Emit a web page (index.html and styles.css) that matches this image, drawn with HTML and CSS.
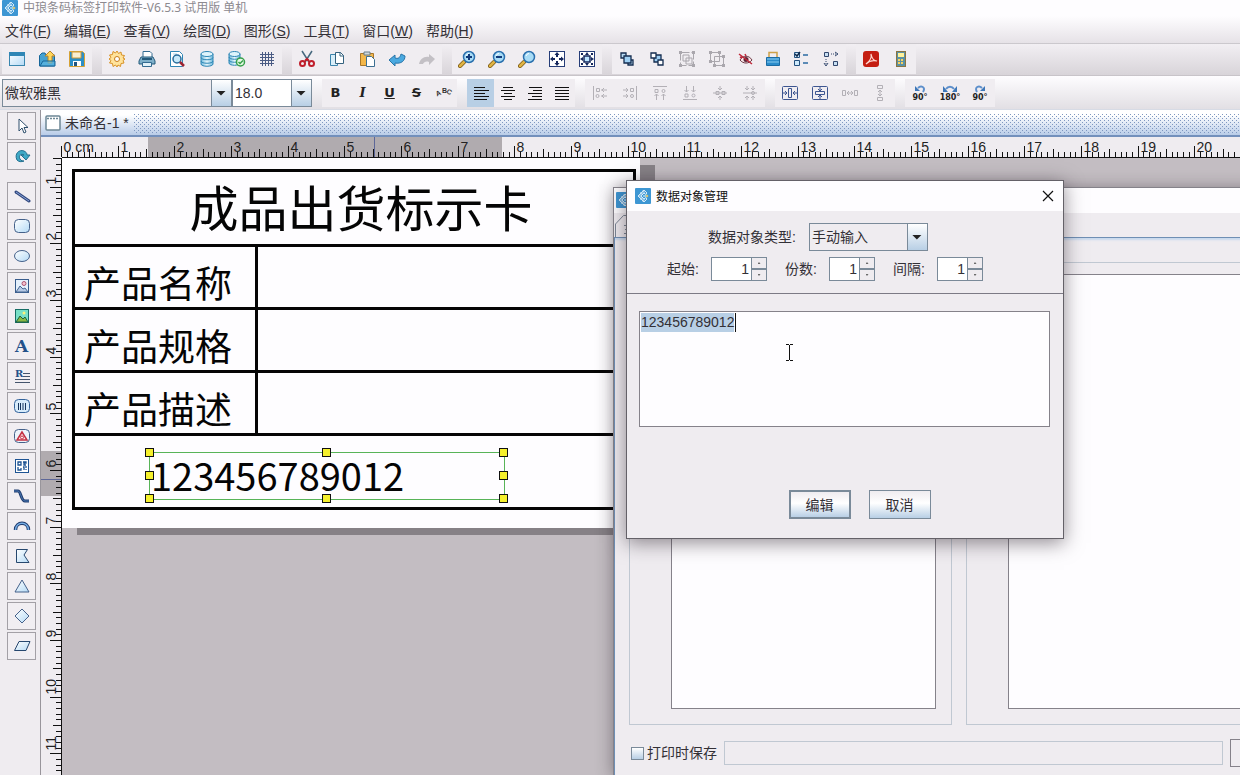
FILE: index.html
```html
<!DOCTYPE html>
<html lang="zh-CN">
<head>
<meta charset="utf-8">
<title>中琅条码标签打印软件</title>
<link rel="stylesheet" href="styles.css">
</head>
<body>
<svg class="defs" aria-hidden="true">
  <defs>
    <linearGradient id="sky" x1="0" y1="0" x2="1" y2="1"><stop offset="0" stop-color="#fff"/><stop offset="1" stop-color="#b4daf6"/></linearGradient>
    <linearGradient id="cyl" x1="0" x2="1"><stop offset="0" stop-color="#6cb8dc"/><stop offset=".5" stop-color="#e6f6fc"/><stop offset="1" stop-color="#6cb8dc"/></linearGradient>
  </defs>
  <symbol id="logo" viewBox="0 0 16 16">
    <rect width="16" height="16" rx="1" fill="#3d96d3"/>
    <g fill="none" stroke="#e4f3fc" stroke-width=".9"><path d="M9 2 12 5 10.500 6.500 9 5 6 8l3 3 1.500-1.500L12 11l-3 3-6-6z"/><path d="m9 3.500-4.500 4.500 4.500 4.500"/><path d="m5 4 6 6M5 12l6-6M7.500 2.500l3 3M7.500 13.500l3-3" stroke-width=".5"/></g>
    <path d="m11 6 2 2-2 2-2-2z" fill="#8fd0f0"/><circle cx="12" cy="8" r="1.300" fill="#d3c27a"/>
  </symbol>
  <symbol id="lens" viewBox="0 0 18 18"><path d="m2 16 4-4" stroke="#7a5a12" stroke-width="4" stroke-linecap="round"/><path d="m2 16 4-4" stroke="#e0b445" stroke-width="2.500" stroke-linecap="round"/><circle cx="11" cy="7" r="5.500" fill="#a8dcf6" stroke="#2b70ae" stroke-width="1.500"/><path d="M8 6a3.500 3.500 0 0 1 3-2.500" stroke="#fff" fill="none"/></symbol>
</svg>

<header class="titlebar"><svg class="logo"><use href="#logo"/></svg><span>中琅条码标签打印软件-V6.5.3 试用版 单机</span></header>

<nav class="menubar">
  <a href="#">文件(<u>F</u>)</a><a href="#">编辑(<u>E</u>)</a><a href="#">查看(<u>V</u>)</a><a href="#">绘图(<u>D</u>)</a><a href="#">图形(<u>S</u>)</a><a href="#">工具(<u>T</u>)</a><a href="#">窗口(<u>W</u>)</a><a href="#">帮助(<u>H</u>)</a>
</nav>

<div class="toolbar">
  <div class="group">
    <button aria-label="新建"><svg viewBox="0 0 18 18"><rect x="1.500" y="2.500" width="15" height="13" fill="url(#sky)" stroke="#3a86ae"/><path d="M1 2h16v4H1z" fill="#2f86b5"/></svg></button>
    <button aria-label="打开"><svg viewBox="0 0 18 18"><path d="M1.500 5.500 4 3h3l1 2h8.500v11h-15z" fill="#45a2d2" stroke="#17669a"/><path d="m12 1 5 5h-3v7h-4V6H7z" fill="#ffd65b" stroke="#b8842b"/><path d="M2 16 5 11h12v5z" fill="#5cb6e1" stroke="#17669a" fill-opacity=".7"/></svg></button>
    <button aria-label="保存"><svg viewBox="0 0 18 18"><path d="M1.500 1.500h13l2 2v13h-15z" fill="#2b8fc7" stroke="#d7a235"/><path d="M4 2h9v6H4z" fill="#fbefd0" stroke="#cf9a38"/><path d="M5 11h8v5H5z" fill="#fff"/><path d="M6 12h3v4H6z" fill="#205580"/></svg></button>
  </div>
  <div class="group">
    <button aria-label="设置"><svg viewBox="0 0 18 18"><path d="m9 1 1.500 2.500 2.500-1.500.500 3 3 .500-1.500 2.500L17 9l-2 1.500 1 2.500-3 .500-.500 3-2.500-1.500L9 17l-1.500-2-2.500 1.500-.500-3-3-.500L3 10.500 1 9l2-1.500L1.500 5l3-.500.500-3L7.500 3z" fill="#ffe39b" stroke="#d89227"/><circle cx="9" cy="9" r="2.500" fill="#fff" stroke="#c77c1b"/></svg></button>
    <button aria-label="打印"><svg viewBox="0 0 18 18"><path d="M5 7V1.500h7l2 2V7" fill="#fff" stroke="#336b91"/><path d="m3 7-2 4v3h16v-3l-2-4z" fill="#7fb0ca" stroke="#255a7b"/><path d="M4 9h10" stroke="#255a7b" stroke-width="2"/><path d="M4.500 12.500h9v4h-9z" fill="#e1f2fa" stroke="#336b91"/></svg></button>
    <button aria-label="预览"><svg viewBox="0 0 18 18"><path d="M2.500 1.500h9l3 3v12h-12z" fill="#fff" stroke="#2f86b5"/><path d="M5 4h4" stroke="#a8d3ea"/><circle cx="9" cy="9" r="4" fill="#c6e9fa" stroke="#266b9b" stroke-width="1.500"/><path d="m12 12 4 4" stroke="#9c2330" stroke-width="2.500"/></svg></button>
    <button aria-label="数据库"><svg viewBox="0 0 18 18"><path d="M3 4v10c0 3 12 3 12 0V4" fill="url(#cyl)" stroke="#2e86b5"/><ellipse cx="9" cy="4" rx="6" ry="2.500" fill="#dff4fc" stroke="#2e86b5"/><path d="M3 7.500c0 3 12 3 12 0M3 11c0 3 12 3 12 0" fill="none" stroke="#2e86b5"/></svg></button>
    <button aria-label="数据库连接"><svg viewBox="0 0 18 18"><path d="M1 4v9c0 3 11 3 11 0V4" fill="url(#cyl)" stroke="#2e86b5"/><ellipse cx="6.500" cy="4" rx="5.500" ry="2.500" fill="#dff4fc" stroke="#2e86b5"/><path d="M1 7c0 3 11 3 11 0M1 10c0 3 11 3 11 0" fill="none" stroke="#2e86b5"/><circle cx="12.500" cy="12" r="4" fill="#e6fae5" stroke="#37a04b" stroke-width="1.500"/><path d="m10.500 12 1.500 1.500 3-3" fill="none" stroke="#37a04b" stroke-width="1.500"/></svg></button>
    <button aria-label="网格"><svg viewBox="0 0 18 18"><path d="M4.500 2v14M7.500 2v14M10.500 2v14M13.500 2v14M2 4.500h14M2 7.500h14M2 10.500h14M2 13.500h14" stroke="#4a5b84" fill="none"/></svg></button>
  </div>
  <div class="group">
    <button aria-label="剪切"><svg viewBox="0 0 18 18"><path d="M4 1l7 11M14 1 7 12" stroke="#46687e" stroke-width="1.500"/><circle cx="4.500" cy="13.500" r="2.500" fill="none" stroke="#c01e2b" stroke-width="2"/><circle cx="13.500" cy="13.500" r="2.500" fill="none" stroke="#c01e2b" stroke-width="2"/><path d="m7 11 2-2 2 2" stroke="#c01e2b" stroke-width="2" fill="none"/></svg></button>
    <button aria-label="复制"><svg viewBox="0 0 18 18"><path d="M2.500 4.500h7v11h-7z" fill="#d9eef9" stroke="#3c84ac"/><path d="M7.500 2.500h5l3 3v8h-8z" fill="#fff" stroke="#35627f"/><path d="M12 2v4h4" fill="none" stroke="#35627f"/></svg></button>
    <button aria-label="粘贴"><svg viewBox="0 0 18 18"><path d="M2.500 3.500h13v12h-13z" fill="#f3b74a" stroke="#a9772a"/><path d="M6 2h6v3H6z" fill="#cfd8dc" stroke="#687c88"/><path d="M8.500 6.500h5l3 3v7h-8z" fill="#fff" stroke="#3c6f92"/></svg></button>
    <button aria-label="撤销"><svg viewBox="0 0 18 18"><path d="m1 10 6-5v3c3 1 5 0 6-4l4 2c0 5-4 8-10 7v3z" fill="#4aa9e0" stroke="#2874a8"/></svg></button>
    <button aria-label="重做" disabled><svg viewBox="0 0 18 18"><path d="m17 9-6-5v3C6 6 2 9 1 14h4c1-2 3-3 6-2v3z" fill="#c3c0c5"/></svg></button>
  </div>
  <div class="group">
    <button aria-label="放大"><svg viewBox="0 0 18 18"><use href="#lens"/><path d="M8 7h6M11 4v6" stroke="#123a7b" stroke-width="2"/></svg></button>
    <button aria-label="缩小"><svg viewBox="0 0 18 18"><use href="#lens"/><path d="M8 7h6" stroke="#123a7b" stroke-width="2"/></svg></button>
    <button aria-label="缩放"><svg viewBox="0 0 18 18"><use href="#lens"/></svg></button>
    <button aria-label="适合窗口"><svg viewBox="0 0 18 18"><rect x="1.500" y="1.500" width="15" height="15" fill="#fff" stroke="#263d78"/><path d="m9 2 2.500 3h-5zM9 16l2.500-3h-5zM2 9l3-2.500v5zM16 9l-3-2.500v5zM8 5h2v2H8zM8 11h2v2H8zM5 8h2v2H5zM11 8h2v2h-2z" fill="#15275c"/></svg></button>
    <button aria-label="适合选择"><svg viewBox="0 0 18 18"><rect x="1.500" y="1.500" width="15" height="15" fill="#fff" stroke="#263d78"/><rect x="6" y="6" width="6" height="6" fill="#bde4ff" stroke="#15275c" stroke-width="1.500"/><path d="m9 2 2 3H7zM9 16l2-3H7zM2 9l3-2v4zM16 9l-3-2v4zM3 3h2v2H3zM13 3h2v2h-2zM3 13h2v2H3zM13 13h2v2h-2z" fill="#15275c"/></svg></button>
  </div>
  <div class="group">
    <button aria-label="置前"><svg viewBox="0 0 18 18"><g stroke="#142d50" stroke-width="1.300"><path d="M3 3h5v5H3z" fill="#b9dcf4"/><path d="M10 10h5v5h-5z" fill="#b9dcf4"/><path d="M6 6h7v7H6z" fill="#9fd0f4"/></g></svg></button>
    <button aria-label="置后"><svg viewBox="0 0 18 18"><g stroke="#142d50" stroke-width="1.300"><path d="M6 5h7v7H6z" fill="#9fd0f4"/><path d="M3 3h5v5H3zM10 10h5v5h-5z" fill="#fff"/></g></svg></button>
    <button aria-label="组合" disabled><svg viewBox="0 0 18 18"><g fill="none" stroke="#aaa7ad"><path d="M2.500 2.500h13v13h-13z" stroke-dasharray="9 2"/><path d="M5 5h6v6H5zM8 8h6v6H8z"/></g><path d="M1 1h3v3H1zM14 1h3v3h-3zM1 14h3v3H1zM14 14h3v3h-3z" fill="#aaa7ad"/></svg></button>
    <button aria-label="取消组合" disabled><svg viewBox="0 0 18 18"><g fill="none" stroke="#aaa7ad"><path d="M2.500 2.500h9v9h-9zM6.500 6.500h9v9h-9z"/></g><path d="M1 1h3v3H1zM10 1h3v3h-3zM1 10h3v3H1zM14 5h3v3h-3zM5 14h3v3H5zM14 14h3v3h-3z" fill="#aaa7ad"/></svg></button>
    <button class="narrow" aria-label="隐藏"><svg viewBox="0 0 18 18"><path d="M3 10c3-5 9-5 12 0-3 4-9 4-12 0z" fill="#f8e7e9" stroke="#6b3744"/><circle cx="9" cy="9.500" r="2.500" fill="#5b2638"/><path d="m2 4 13 10M3 7l2 1M8 4l1 2" stroke="#c0283a" stroke-width="1.500"/></svg></button>
    <button class="narrow" aria-label="锁定"><svg viewBox="0 0 18 18"><path d="M5 8V2.500h8V8" fill="none" stroke="#cda149" stroke-width="1.500"/><path d="M2.500 7.500h13v8h-13z" fill="#2b8ccb" stroke="#1a6ba3"/><path d="M3 9h12M3 12h12" stroke="#8ccdf0"/></svg></button>
    <button aria-label="属性"><svg viewBox="0 0 18 18"><path d="M2.500 2.500h5v5h-5zM2.500 10.500h5v5h-5z" fill="#cfeafb" stroke="#22507e"/><path d="m3 4 2 2 3-4" fill="none" stroke="#10284a" stroke-width="1.500"/><path d="M11 5h5M11 13h5" stroke="#2b6ba3" stroke-width="1.500"/></svg></button>
    <button aria-label="顺序"><svg viewBox="0 0 18 18"><path d="M2.500 2.500h4v4h-4zM11.500 11.500h4v4h-4z" fill="#c8dff2" stroke="#32476d"/><path d="M9 4h5M4 9v5" stroke="#32476d" stroke-dasharray="1 1"/><path d="m13 2 3 2-3 2M2 13l2 3 2-3" fill="none" stroke="#32476d"/></svg></button>
  </div>
  <div class="group">
    <button aria-label="PDF"><svg viewBox="0 0 18 18"><rect x="1" y="1" width="16" height="16" rx="3" fill="#c41e12"/><path d="M9 4c1 5 3 7 6 7-4-1-8 0-11 3 4-3 6-6 5-10z" fill="none" stroke="#ffd8d0" stroke-width="1.200"/></svg></button>
    <button aria-label="计算器"><svg viewBox="0 0 18 18"><rect x="4.500" y="1.500" width="9" height="15" fill="#5b92a5" stroke="#8a7440"/><path d="M6 3h6v4H6z" fill="#fff29a"/><path d="M6 9h2v2H6zM9 9h2v2H9zM6 12h2v2H6zM9 12h2v2H9z" fill="#fbd25e"/></svg></button>
  </div>
</div>

<div class="toolbar format">
  <div class="combo font"><select aria-label="字体"><option>微软雅黑</option></select></div>
  <div class="combo size"><select aria-label="字号"><option>18.0</option></select></div>
  <div class="group letters">
    <button class="b">B</button><button class="i">I</button><button class="u">U</button><button class="s">S</button>
    <button aria-label="弧形文字"><svg viewBox="0 0 18 18"><g class="arc-text"><text x="2" y="12" transform="rotate(-25 3 12)">A</text><text x="7" y="9">B</text><text x="11" y="9" transform="rotate(25 11 9)">C</text></g></svg></button>
  </div>
  <div class="group aligns">
    <button class="on" aria-label="左对齐"><svg viewBox="0 0 18 18"><path d="M2 3.500h11M2 6.500h15M2 9.500h11M2 12.500h15M2 15.500h13" stroke="#111"/></svg></button>
    <button aria-label="居中"><svg viewBox="0 0 18 18"><path d="M4 3.500h10M2 6.500h14M5 9.500h8M2 12.500h14M5 15.500h8" stroke="#111"/></svg></button>
    <button aria-label="右对齐"><svg viewBox="0 0 18 18"><path d="M3 3.500h13M7 6.500h9M2 9.500h14M6 12.500h10M2 15.500h14" stroke="#111"/></svg></button>
    <button aria-label="两端对齐"><svg viewBox="0 0 18 18"><path d="M2 3.500h14M2 6.500h14M2 9.500h14M2 12.500h14M2 15.500h14" stroke="#111"/></svg></button>
  </div>
  <div class="group dim">
    <button disabled aria-label="对齐左边"><svg viewBox="0 0 18 18"><path d="M2.500 2v14M5.500 4.500h3v3h-3zM10 6h6M13 4l-2 2 2 2M10 12h6M13 10l-2 2 2 2"/><circle cx="6.500" cy="12" r="1.500"/></svg></button>
    <button disabled aria-label="对齐右边"><svg viewBox="0 0 18 18"><path d="M15.500 2v14M9.500 4.500h3v3h-3zM2 6h5M5 4l2 2-2 2M2 12h5M5 10l2 2-2 2"/><circle cx="11" cy="12" r="1.500"/></svg></button>
    <button disabled aria-label="对齐上边"><svg viewBox="0 0 18 18"><path d="M2 2.500h14M4 5.500h3v3H4zM5.500 10v6M3.500 12l2-2 2 2M12.500 10v6M10.500 12l2-2 2 2"/><circle cx="12.500" cy="7" r="1.500"/></svg></button>
    <button disabled aria-label="对齐下边"><svg viewBox="0 0 18 18"><path d="M2 15.500h14M4 10h3v3H4zM5.500 2v6M3.500 6l2 2 2-2M12.500 2v6M10.500 6l2 2 2-2"/><circle cx="12.500" cy="11.500" r="1.500"/></svg></button>
    <button disabled aria-label="水平居中"><svg viewBox="0 0 18 18"><path d="M2 9h14M5 7.500h3v3H5zM11 7.500h3v3h-3zM9 2v4M7 4l2 2 2-2M9 16v-4M7 14l2-2 2 2"/></svg></button>
    <button disabled aria-label="垂直居中"><svg viewBox="0 0 18 18"><path d="M2 9h14M6 2v4M4 4l2 2 2-2M12 2v4M10 4l2 2 2-2M6 16v-4M4 14l2-2 2 2M12 16v-4M10 14l2-2 2 2"/><circle cx="12" cy="9" r="1.500"/></svg></button>
  </div>
  <div class="group navy">
    <button aria-label="页面水平居中"><svg viewBox="0 0 18 18"><rect x="1.500" y="2.500" width="15" height="13" rx="1"/><path d="M7.500 4.500h3v9h-3zM2 9h4M4 7l2 2-2 2M16 9h-4M14 7l-2 2 2 2"/></svg></button>
    <button aria-label="页面垂直居中"><svg viewBox="0 0 18 18"><rect x="1.500" y="2.500" width="15" height="13" rx="1"/><path d="M4.500 7.500h9v3h-9zM9 3v4M7 5l2 2 2-2M9 15v-4M7 13l2-2 2 2"/></svg></button>
    <button class="dim" disabled aria-label="水平间距"><svg viewBox="0 0 18 18"><path d="M1.500 6.500h3v5h-3zM13.500 6.500h3v5h-3zM6 9h6M8 7 6 9l2 2M10 7l2 2-2 2"/></svg></button>
    <button class="dim" disabled aria-label="垂直间距"><svg viewBox="0 0 18 18"><path d="M6.500 1.500h5v3h-5zM6.500 13.500h5v3h-5zM9 6v6M7 8l2-2 2 2M7 10l2 2 2-2"/></svg></button>
  </div>
  <div class="group turns">
    <button><svg viewBox="0 0 18 8"><path d="M12 7c3-5-2-7-5-4" fill="none" stroke="#5d8fcb" stroke-width="2"/><path d="M4 1v5h5z" fill="#3e78b9"/></svg>90°</button>
    <button><svg viewBox="0 0 18 8"><path d="M5 4c2-3 6-3 8 0" fill="none" stroke="#5d8fcb" stroke-width="2"/><path d="M2 1v6h5zM16 1v6h-5z" fill="#3e78b9"/></svg>180°</button>
    <button><svg viewBox="0 0 18 8"><path d="M6 7c-3-5 2-7 5-4" fill="none" stroke="#5d8fcb" stroke-width="2"/><path d="M14 1v5H9z" fill="#3e78b9"/></svg>90°</button>
  </div>
</div>

<div class="workspace">
  <aside class="toolbox">
    <button aria-label="选择"><svg viewBox="0 0 18 18"><path d="M6 2v12l3-3 2 5 2-1-2-4.500h4z" fill="#fff" stroke="#2f4f6c"/></svg></button>
    <button class="last" aria-label="旋转"><svg viewBox="0 0 18 18"><path d="M4 13C1 7 6 2 11 4c2 1 3 2 3 4h3l-4 5-5-5h3c-3-2-6 1-4 4 1 2 3 2 4 2-3 1-5 1-7-1z" fill="#3fa9c6" stroke="#236f8f"/></svg></button>
    <button aria-label="直线"><svg viewBox="0 0 18 18"><path d="m3 5 13 9" stroke="#31487e" stroke-width="3" stroke-linecap="round"/><path d="m3 5 13 9" stroke="#8aa3d8" stroke-width="1"/></svg></button>
    <button aria-label="圆角矩形"><svg viewBox="0 0 18 18"><rect x="1.500" y="2.500" width="15" height="13" rx="4" fill="url(#sky)" stroke="#45618a"/></svg></button>
    <button aria-label="椭圆"><svg viewBox="0 0 18 18"><ellipse cx="9" cy="9" rx="7.500" ry="5.500" fill="url(#sky)" stroke="#45618a"/></svg></button>
    <button aria-label="图片"><svg viewBox="0 0 18 18"><rect x="2.500" y="2.500" width="13" height="13" fill="#e5f0fc" stroke="#385c8c"/><circle cx="11" cy="6.500" r="2" fill="#f5c2cf" stroke="#ad5572"/><path d="m3 15 4-6 3 3 2-1 3 4z" fill="#b6c8e4" stroke="#486894"/></svg></button>
    <button aria-label="图库"><svg viewBox="0 0 18 18"><rect x="2.500" y="2.500" width="13" height="13" fill="#78e0c7" stroke="#176d65"/><circle cx="11" cy="6" r="1.500" fill="#fff27a"/><path d="m3 15 4-6 3 3 2-2 3 5z" fill="#88b843" stroke="#1e6142"/></svg></button>
    <button class="glyph">A</button>
    <button aria-label="富文本"><svg viewBox="0 0 18 18"><text class="rich" x="2" y="10">R</text><path d="M10 6.500h7M10 9.500h7M2 12.500h15M2 15.500h15" stroke="#44546c"/></svg></button>
    <button aria-label="条形码"><svg viewBox="0 0 18 18"><rect x="1.500" y="2.500" width="15" height="13" rx="4" fill="#d7ebfb" stroke="#34639b"/><path d="M5.500 6v7M7.500 6v7M10 6v7M12.500 6v7" stroke="#15345e"/></svg></button>
    <button aria-label="图形"><svg viewBox="0 0 18 18"><rect x="1.500" y="2.500" width="15" height="13" rx="4" fill="#edf3fb" stroke="#45618a"/><path d="m9 5-5 8h10z" fill="#ffe6e8" stroke="#c32f42" stroke-width="1.500"/><circle cx="9" cy="10.500" r="1.500" fill="none" stroke="#c32f42"/></svg></button>
    <button aria-label="二维码"><svg viewBox="0 0 18 18"><rect x="2.500" y="2.500" width="13" height="13" fill="#fff" stroke="#1d5393"/><path d="M5 5h3v3H5zM10 5h3v1h-2v2h2M5 10v3h3v-2M10 10h1v3M13 9v2M13 12v1" fill="none" stroke="#1d5393" stroke-width="1.300"/></svg></button>
    <button aria-label="曲线"><svg viewBox="0 0 18 18"><path d="M1 4h4c3 0 3 10 7 10h4" fill="none" stroke="#203c6e" stroke-width="3"/><path d="M1 4h4c3 0 3 10 7 10h4" fill="none" stroke="#4a78b4"/></svg></button>
    <button aria-label="弧线"><svg viewBox="0 0 18 18"><path d="M2.500 13c0-9 13-9 13 0" fill="none" stroke="#203c6e" stroke-width="3.500"/><path d="M2.500 13c0-9 13-9 13 0" fill="none" stroke="#76aee6" stroke-width="1.500"/></svg></button>
    <button aria-label="多边形"><svg viewBox="0 0 18 18"><path d="M3.500 2.500h11L11 8l5 7.500H3.500z" fill="url(#sky)" stroke="#26476e"/></svg></button>
    <button aria-label="三角形"><svg viewBox="0 0 18 18"><path d="m9 3 7 12H2z" fill="url(#sky)" stroke="#45618a"/></svg></button>
    <button aria-label="菱形"><svg viewBox="0 0 18 18"><path d="m9 2 7 7-7 7-7-7z" fill="url(#sky)" stroke="#45618a"/></svg></button>
    <button aria-label="平行四边形"><svg viewBox="0 0 18 18"><path d="M6 4.500h11l-4 9H1.500z" fill="url(#sky)" stroke="#26476e"/></svg></button>
  </aside>

  <main class="document">
    <div class="tabs"><div class="tab"><svg viewBox="0 0 16 16"><rect x="1" y="1" width="14" height="14" rx="1" fill="#fff" stroke="#6c8795" stroke-width="1.500"/><path d="M2 3.500h12" stroke="#6c8795" stroke-width="1.500" stroke-dasharray="2 1"/></svg>未命名-1 *</div><div class="hatch"></div></div>
    <div class="sheet">
      <svg class="ruler-x" id="ruler-x"></svg>
      <svg class="ruler-y" id="ruler-y"></svg>
      <div class="canvas">
        <div class="paper">
          <table class="card">
            <colgroup><col class="names"><col></colgroup>
            <tr class="head"><td colspan="2">成品出货标示卡</td></tr>
            <tr><th>产品名称</th><td></td></tr>
            <tr><th>产品规格</th><td></td></tr>
            <tr><th>产品描述</th><td></td></tr>
            <tr class="foot"><td colspan="2"></td></tr>
          </table>
          <div class="object">123456789012<i class="n w"></i><i class="n c"></i><i class="n e"></i><i class="m w"></i><i class="m e"></i><i class="z w"></i><i class="z c"></i><i class="z e"></i></div>
        </div>
      </div>
    </div>
  </main>
</div>

<section class="window back">
  <div class="back-title"><svg class="logo"><use href="#logo"/></svg></div>
  <div class="back-tabs"><svg class="back-tab" viewBox="0 0 70 22"><path d="M.5 22V9l8-8.500H70M9 10.500h4M10 14.500h3M9 18.500h4" fill="none" stroke="#7c8694"/></svg></div>
  <div class="back-body">
    <div class="panels"><div class="panel left"><div class="list"></div></div><div class="panel right"><div class="list"></div></div></div>
    <div class="save-row"><input type="checkbox" id="save"><label for="save">打印时保存</label><input class="path" type="text" aria-label="保存路径" disabled><button aria-label="浏览"></button></div>
  </div>
</section>

<section class="window dialog" role="dialog" aria-labelledby="dlg">
  <header class="dialog-title"><svg class="logo"><use href="#logo"/></svg><h1 id="dlg">数据对象管理</h1><button aria-label="关闭"><svg viewBox="0 0 12 12"><path d="m1 1 10 10M11 1 1 11" stroke="#111" stroke-width="1.200"/></svg></button></header>
  <div class="options">
    <div class="row kind"><label for="kind">数据对象类型:</label><div class="combo"><select id="kind"><option>手动输入</option></select></div></div>
    <div class="row numbers">
      <label for="n1">起始:</label><div class="spin wide"><input id="n1" type="number" value="1"><button aria-label="增加"></button><button aria-label="减少"></button></div>
      <label for="n2">份数:</label><div class="spin"><input id="n2" type="number" value="1"><button aria-label="增加"></button><button aria-label="减少"></button></div>
      <label for="n3">间隔:</label><div class="spin"><input id="n3" type="number" value="1"><button aria-label="增加"></button><button aria-label="减少"></button></div>
    </div>
  </div>
  <div class="entry">
    <textarea id="entry" aria-label="数据内容" spellcheck="false">123456789012</textarea>
    <span class="caret"></span>
    <svg class="pointer" viewBox="0 0 9 17"><path d="M1 .5h3M5 .5h3M4.500 1v15M1 16.500h3M5 16.500h3" stroke="#111"/></svg>
  </div>
  <footer class="actions"><button class="primary">编辑</button><button>取消</button></footer>
</section>
<script src="app.js"></script>
</body>
</html>
```
FILE: styles.css
```css
* { box-sizing: border-box; }
html, body { height: 100%; }
body {
  margin: 0;
  display: flex;
  flex-direction: column;
  overflow: hidden;
  position: relative;
  background: #efecf0;
  color: #333036;
  font: 14px/20px "Liberation Sans", "Noto Sans CJK SC", sans-serif;
}
button, select, input, textarea { font: inherit; color: inherit; margin: 0; padding: 0; border-radius: 0; }
button { border: 0; background: none; display: flex; align-items: center; justify-content: center; flex: none; }
svg { display: block; flex: none; }
.defs { position: absolute; width: 0; height: 0; }
.logo { width: 16px; height: 16px; }

.titlebar { display: flex; align-items: center; gap: 5px; height: 16px; padding-left: 2px; background: #fefdff; color: #8d8a90; font: 12px/16px "Noto Sans", "Noto Sans CJK SC", sans-serif; flex: none; }
.menubar { display: flex; gap: 13px; height: 28px; padding: 5px; background: linear-gradient(#fefdff, #e6e2e7); border-bottom: 1px solid #cbc8cd; flex: none; }
.menubar a { color: inherit; text-decoration: none; }

.toolbar { display: flex; gap: 10px; height: 32px; padding: 0 2px 1px; background: linear-gradient(#f2eff3, #d8d4d9); border-bottom: 1px solid #c8c4c9; flex: none; }
.group { display: flex; background: #f0edf1; }
.group button { width: 30px; }
.group button.narrow { width: 27px; }
.group svg { width: 18px; height: 18px; }
.toolbar.format { height: 34px; padding: 3px 2px 2px; background: linear-gradient(#fefdff, #e2dfe4); border-bottom-color: #d7dbe5; }

.combo { display: grid; grid-template-columns: 1fr 20px; height: 28px; border: 1px solid #7a8a99; background: #efecf0; }
.combo::before { content: ""; grid-area: 1 / 2; border-left: 1px solid #7a8a99; background: linear-gradient(#fff, #b8cfe5); z-index: 1; pointer-events: none; }
.combo::after { content: ""; grid-area: 1 / 2; width: 10px; height: 5px; align-self: center; justify-self: center; background: #222; clip-path: polygon(0 0, 100% 0, 50% 100%); z-index: 2; pointer-events: none; }
.combo select { grid-area: 1 / 1 / 2 / 3; width: 100%; height: 100%; appearance: none; border: 0; background: none; padding-left: 2px; outline: 0; }
.font { width: 230px; }
.size { width: 80px; margin-left: -10px; background: #fff; }
.letters button, .aligns button { width: 27px; }
.letters { font: bold 13px/16px "DejaVu Sans", sans-serif; color: #222; }
.letters .i { font-style: italic; font-family: "DejaVu Serif", serif; }
.letters .u { text-decoration: underline; }
.letters .s { text-decoration: line-through; }
.arc-text { font: bold 7px "Liberation Sans", sans-serif; fill: #333; }
.aligns .on { background: #b8cfe5; }
.dim svg { fill: none; stroke: #b3b0b6; }
.navy svg { fill: none; stroke: #3d5590; }
.navy .dim svg { stroke: #b3b0b6; }
.turns button { flex-direction: column; font: bold 8px/9px "DejaVu Sans", sans-serif; color: #222; }
.turns svg { height: 8px; }

.workspace { display: flex; flex: 1; min-height: 0; }
.toolbox { display: flex; flex-direction: column; gap: 2px; width: 40px; padding: 2px 0 0 7px; flex: none; }
.toolbox button { width: 29px; height: 28px; border: 1px solid #a3a0a6; background: #f1eef2; }
.toolbox .last { margin-bottom: 10px; }
.toolbox svg { width: 18px; height: 18px; }
.toolbox .glyph { font: bold 17px/20px "DejaVu Serif", serif; color: #24518a; }
.rich { font: bold 10px "DejaVu Serif", serif; fill: #24518a; }

.document { display: flex; flex-direction: column; flex: 1; min-width: 0; border-left: 1px solid #98959b; }
.tabs { display: flex; height: 27px; border-bottom: 2px solid #7390bc; background: linear-gradient(#fff 20%, #b9cce8); flex: none; }
.tab { display: flex; align-items: center; gap: 4px; padding: 0 5px 0 4px; }
.tab svg { width: 16px; height: 16px; }
.hatch {
  flex: 1;
  margin: 4px 0 1px;
  background: conic-gradient(at 1px 1px, transparent 75%, #7e97c0 0) 0 0 / 4px 4px, conic-gradient(at 1px 1px, transparent 75%, #7e97c0 0) 2px 2px / 4px 4px;
}
.sheet { display: grid; grid-template: 21px 1fr / 21px 1fr; flex: 1; min-height: 0; }
.ruler-x { grid-area: 1 / 2; width: 100%; height: 21px; overflow: visible; }
.ruler-y { grid-area: 2 / 1; width: 21px; height: 100%; }
.ruler-x path, .ruler-y path { fill: none; stroke: #111; }
.ruler-x rect, .ruler-y rect { fill: #b0abaf; }
.ruler-x .mark, .ruler-y .mark { stroke: #5d6798; }
.ruler-x text, .ruler-y text { font: 14px "Liberation Sans", sans-serif; fill: #222; }

.canvas { grid-area: 2 / 2; background: #c3bdc2; overflow: hidden; }
.paper { position: relative; width: 578px; padding: 11px 4px 18px 10px; background: #fefdff; box-shadow: 15px 7px 0 #868186; color: #050505; font-family: "Noto Sans CJK SC", sans-serif; }
.card { width: 564px; table-layout: fixed; border-collapse: separate; border-spacing: 3px; background: #050505; }
.card .names { width: 180px; }
.card td, .card th { padding: 0; background: #fefdff; height: 60px; font-weight: 400; }
.card th { padding: 12px 0 2px 9px; text-align: left; font-size: 37px; line-height: 46px; white-space: nowrap; }
.card .head td { height: 72px; padding: 0 0 4px 14px; font-size: 49px; line-height: 68px; text-align: center; }
.card .foot td { height: 71px; }
.object { position: absolute; left: 87px; top: 294px; width: 356px; height: 48px; padding-left: 1px; border: 1px solid #58b458; font-size: 38px; line-height: 43px; }
.object i { position: absolute; width: 9px; height: 9px; margin: -5px; background: #f5f02c; border: 1px solid #111; }
.object .n { top: 0; } .object .m { top: 50%; } .object .z { top: 100%; }
.object .w { left: 0; } .object .c { left: 50%; } .object .e { left: 100%; }

.window { position: absolute; display: flex; flex-direction: column; background: #efecf0; }
.back { left: 613px; top: 187px; right: -40px; bottom: 0; border: 1px solid #85828a; border-bottom: 0; box-shadow: 0 2px 16px rgba(40, 30, 40, .45); }
.back-title { height: 25px; padding: 4px 2px; background: #fefdff; flex: none; }
.back-tabs { height: 24px; padding: 2px 1px 0; flex: none; }
.back-tab { width: 70px; height: 22px; }
.back-body { display: flex; flex-direction: column; flex: 1; border-top: 1px solid #6f8fb4; border-left: 1px solid #6f8fb4; padding: 24px 0 8px 14px; box-shadow: inset 0 3px 2px -1px #c8daee; }
.panels { display: flex; flex: 1; gap: 14px; }
.panel { border: 1px solid #c0c8d2; padding: 11px 15px 15px 41px; display: flex; }
.panel.left { width: 323px; }
.panel.right { flex: 1; margin-right: -20px; }
.list { flex: 1; border: 1px solid #85828a; background: #fefdff; }
.save-row { display: flex; align-items: center; height: 28px; margin-top: 14px; padding-left: 2px; }
.save-row input[type="checkbox"] { appearance: none; width: 13px; height: 13px; border: 1px solid #7a8a99; background: linear-gradient(#fff, #b8cfe5); margin-right: 3px; }
.save-row label { margin-right: 7px; }
.save-row .path { flex: 1; height: 24px; border: 1px solid #c0c8d2; background: #efecf0; }
.save-row button { width: 49px; height: 28px; margin-left: 7px; border: 1px solid #85828a; }

.dialog { left: 626px; top: 180px; width: 438px; border: 1px solid #646168; box-shadow: 0 4px 18px rgba(40, 30, 40, .5); }
.dialog-title { display: flex; align-items: center; gap: 5px; height: 30px; padding: 0 9px 0 8px; background: #fefdff; color: #111; }
.dialog-title h1 { flex: 1; margin: 0; font: 12px/18px "Noto Sans CJK SC", sans-serif; }
.dialog-title button svg { width: 12px; height: 12px; }
.options { padding: 12px 0; border-bottom: 1px solid #7c7a85; }
.row { display: flex; align-items: center; }
.kind { padding-left: 81px; gap: 13px; }
.kind .combo { width: 119px; }
.numbers { padding: 6px 0 0 40px; }
.numbers label { width: 44px; }
.spin { display: grid; grid-template: 12px 12px / 1fr 16px; width: 46px; height: 24px; margin-right: 18px; }
.spin.wide { width: 56px; }
.spin input { grid-row: 1 / 3; width: 100%; border: 1px solid #7a8a99; border-right: 0; background: #fff; text-align: right; padding-right: 2px; appearance: textfield; }
.spin input::-webkit-inner-spin-button { appearance: none; margin: 0; }
.spin button { border: 1px solid #7a8a99; }
.spin button::before { content: ""; width: 3px; height: 2px; background: #666; clip-path: polygon(50% 0, 100% 100%, 0 100%); }
.spin button:last-child::before { clip-path: polygon(0 0, 100% 0, 50% 100%); }
.entry { position: relative; padding: 17px 13px 0 12px; }
.entry textarea { display: block; width: 100%; height: 116px; border: 1px solid #85828a; background: #fefdff; outline: 0; resize: none; line-height: 19px; padding: 1px; }
.entry textarea::selection { background: #b8cfe5; color: #333036; }
.caret { position: absolute; left: 108px; top: 19px; width: 1px; height: 19px; background: #111; }
.pointer { position: absolute; left: 158px; top: 50px; width: 9px; height: 17px; }
.actions { display: flex; justify-content: center; gap: 18px; padding: 63px 0 19px 29px; }
.actions button { width: 62px; height: 29px; border: 1px solid #7a8a99; background: linear-gradient(#efecf0, #fff 45%, #b8cfe5); }
.actions .primary { border-width: 2px; }
```
FILE: app.js
```js
const PITCH = 5.666;
const tickLength = i => (i % 10 === 0 ? 11 : i % 5 === 0 ? 8 : 5);
const rulerX = document.getElementById('ruler-x');
const rulerY = document.getElementById('ruler-y');

// Horizontal ruler: millimetre ticks hang on a baseline under the numbers.
const width = rulerX.clientWidth || rulerX.getBoundingClientRect().width;
let ticks = `M0 20.5H${width}`;
let labels = '';
for (let i = 0; i * PITCH < width; i++) {
  const x = Math.round(i * PITCH) - 0.5;
  ticks += `M${x} 20V${20 - tickLength(i)}`;
  if (i % 10 === 0 && x + 20 < width) labels += `<text x="${x + 2}" y="15">${i ? i / 10 : '0 cm'}</text>`;
}
rulerX.innerHTML =
  `<rect x="86" width="354" height="20"/><path class="mark" d="M312.5 0V20"/><path d="${ticks}"/>${labels}`;

// Vertical ruler: numbers read upwards, ending at their tick.
const height = rulerY.clientHeight || rulerY.getBoundingClientRect().height;
ticks = `M20.5 0V${height}`;
labels = '';
for (let i = 5; i * PITCH - 28 < height; i++) {
  const y = Math.round(i * PITCH - 28) + 0.5;
  ticks += `M20 ${y}H${20 - tickLength(i)}`;
  if (i % 10 === 0) labels += `<text transform="translate(15 ${y - 3}) rotate(-90)">${i / 10}</text>`;
}
rulerY.innerHTML =
  `<rect y="293" width="20" height="45"/><path class="mark" d="M0 321.5H20"/><path d="${ticks}"/>${labels}`;

const entry = document.getElementById('entry');
entry.focus();
entry.select();
```
